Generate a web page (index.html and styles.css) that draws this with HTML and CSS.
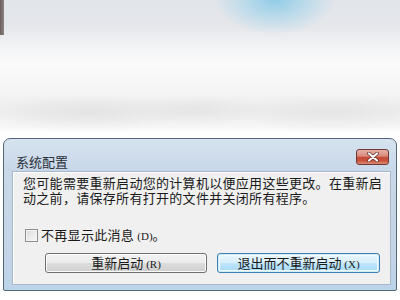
FILE: index.html
```html
<!DOCTYPE html>
<html lang="zh-CN">
<head>
<meta charset="utf-8">
<title>系统配置</title>
<link rel="stylesheet" href="styles.css">
</head>
<body>
<div class="backdrop"></div>
<div class="dialog">
  <div class="titlebar">
    <div class="title">系统配置</div>
    <div class="close">
      <svg width="12" height="10" viewBox="0 0 12 10">
        <path d="M2 1.5 L10 8.5 M10 1.5 L2 8.5" stroke="#5a2a24" stroke-width="3.6" stroke-linecap="round"/>
        <path d="M2 1.5 L10 8.5 M10 1.5 L2 8.5" stroke="#ffffff" stroke-width="2.2" stroke-linecap="round"/>
      </svg>
    </div>
  </div>
  <div class="content">
    <div class="message">
      <span class="line">您可能需要重新启动您的计算机以便应用这些更改。在重新启</span>
      <span class="line">动之前，请保存所有打开的文件并关闭所有程序。</span>
    </div>
    <div class="check-row">
      <span class="checkbox"></span>
      <span class="check-label">不再显示此消息 <span class="key">(D)</span>。</span>
    </div>
    <div class="buttons">
      <div class="btn">重新启动 <span class="key">(R)</span></div>
      <div class="btn btn-default">退出而不重新启动 <span class="key">(X)</span></div>
    </div>
  </div>
</div>
</body>
</html>
```
FILE: styles.css
```css
html, body {
  margin: 0;
  padding: 0;
}
body {
  width: 400px;
  height: 300px;
  overflow: hidden;
  background: #ffffff;
  font-family: "Noto Sans CJK SC", "Noto Sans", sans-serif;
  color: #1a1a1a;
}
.backdrop {
  height: 138px;
  background:
    linear-gradient(to right, #6a5f5c 0, #8e8380 4px, transparent 4px) 0 0 / 5px 35px no-repeat,
    radial-gradient(ellipse 60px 34px at 275px 0px, rgba(140,202,230,0.95) 0%, rgba(165,212,234,0.7) 45%, rgba(225,232,240,0) 100%),
    radial-gradient(ellipse 110px 18px at 90px 112px, rgba(226,226,226,0.9), rgba(236,236,236,0)),
    radial-gradient(ellipse 70px 16px at 200px 110px, rgba(228,228,228,0.9), rgba(236,236,236,0)),
    radial-gradient(ellipse 110px 18px at 330px 112px, rgba(228,228,228,0.9), rgba(236,236,236,0)),
    linear-gradient(to bottom, #e2e5ea 0, #e5e7eb 28px, #f4f5f7 48px, #fbfbfb 66px, #f5f5f5 88px, #efefef 110px, #f6f6f6 127px, #ffffff 134px);
}
.dialog {
  box-sizing: border-box;
  width: 394px;
  height: 153px;
  margin-left: 3px;
  border: 1px solid #566779;
  border-radius: 7px 7px 2px 2px;
  padding: 0 5px 5px 8px;
  background: linear-gradient(to bottom, #d6e2ef 0, #c9d8e9 30px, #c3d4e7 120px, #bcd4ea 100%);
  display: flex;
  flex-direction: column;
}
.titlebar {
  height: 32px;
  display: flex;
  align-items: flex-start;
  justify-content: space-between;
}
.title {
  margin-top: 13px;
  padding-left: 4px;
  font-size: 13px;
  line-height: 20px;
  color: #2a2f38;
}
.close {
  margin-top: 10px;
  margin-right: 2px;
  box-sizing: border-box;
  width: 33px;
  height: 16px;
  border: 1px solid #6e3b34;
  border-radius: 3px;
  background: linear-gradient(to bottom, #e7b1a6 0, #d9897b 45%, #c74c38 50%, #c9513c 75%, #dd8a74 100%);
  display: flex;
  align-items: center;
  justify-content: center;
}
.close svg {
  display: block;
}
.content {
  flex: 1;
  box-sizing: border-box;
  background: #f0f0f0;
  border: 1px solid #a9b8c9;
  box-shadow: inset 1px 1px 0 #ffffff;
  padding: 3px 10px 0 10px;
}
.message {
  display: flex;
  flex-direction: column;
}
.line {
  display: block;
  font-size: 13px;
  letter-spacing: 0.3px;
  line-height: 15px;
  white-space: nowrap;
  color: #1a1a1a;
}
.check-row {
  margin-top: 22px;
  height: 16px;
  display: flex;
  align-items: center;
  gap: 3px;
  padding-left: 2px;
}
.checkbox {
  box-sizing: border-box;
  width: 13px;
  height: 13px;
  border: 1px solid #8e8f8f;
  background: linear-gradient(135deg, #d8d8d8 0, #ededed 60%, #f8f8f8 100%);
  box-shadow: inset 0 0 0 1px #f4f4f4;
}
.check-label {
  font-size: 13px;
  letter-spacing: 0.3px;
  line-height: 16px;
}
.key {
  font-family: "Liberation Serif", serif;
  font-size: 11px;
  letter-spacing: 0;
}
.buttons {
  margin-top: 10px;
  display: flex;
  justify-content: flex-end;
  gap: 10px;
}
.btn {
  box-sizing: border-box;
  width: 162px;
  height: 20px;
  border: 1px solid #707070;
  border-radius: 3px;
  background: linear-gradient(to bottom, #f3f3f3 0, #ebebeb 48%, #dddddd 52%, #cfcfcf 100%);
  box-shadow: inset 0 0 0 1px #fbfbfb;
  font-size: 13px;
  line-height: 18px;
  text-align: center;
  color: #1a1a1a;
}
.btn-default {
  width: 163px;
  border-color: #3c7fb1;
  background: linear-gradient(to bottom, #eaf6fd 0, #d9f0fc 48%, #bee6fd 52%, #a7d9f5 100%);
  box-shadow: inset 0 0 0 1px #cfeefc, inset 0 0 0 2px #f0f8fd;
}
```
